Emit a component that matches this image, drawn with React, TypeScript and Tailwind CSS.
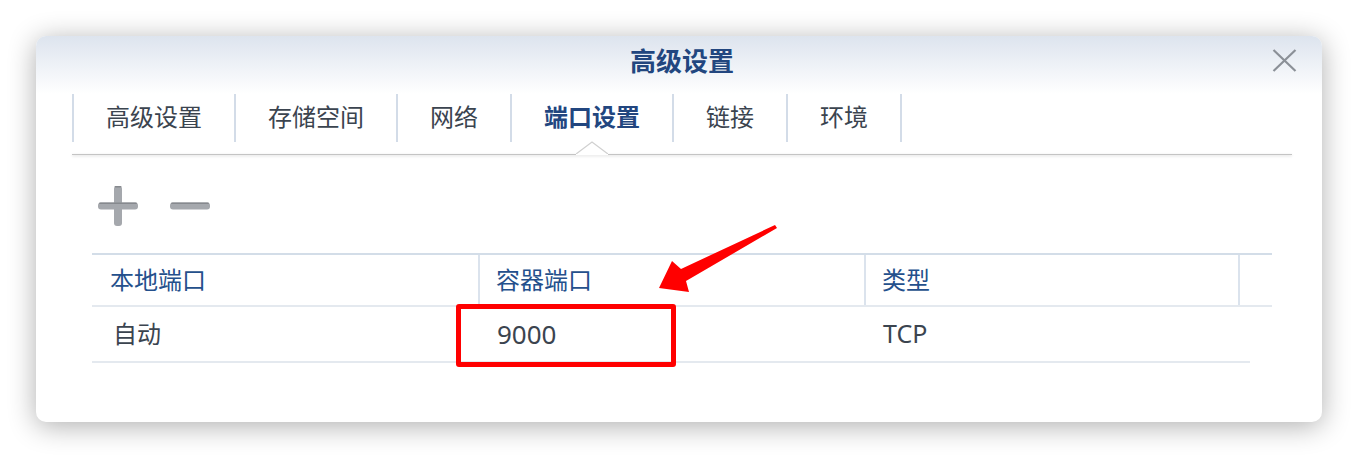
import React from 'react'

const tabs = ["高级设置", "存储空间", "网络", "端口设置", "链接", "环境"]

function App() {
  const font = { fontFamily: '"Noto Sans", "Noto Sans CJK SC", sans-serif' }
  return (
    <div className="relative h-[458px] w-[1358px] bg-white pl-[36px] pt-[36px]" style={font}>
      <div className="relative h-[386px] w-[1286px] rounded-[10px] bg-white shadow-[0_4px_28px_rgba(0,0,0,0.32)]">
        {/* title bar */}
        <div className="flex h-[58px] justify-center rounded-t-[10px] bg-gradient-to-b from-[#dde4ee] to-white pl-[6px] pt-[10px]">
          <div className="text-[26px] font-bold leading-[30px] text-[#22467f]">高级设置</div>
        </div>
        <div className="absolute right-[25px] top-[13px] h-[23px] w-[25px]">
          <svg width="25" height="23" viewBox="0 0 25 23">
            <path d="M1.5 1 L23.5 22 M23.5 1 L1.5 22" stroke="#8b9097" strokeWidth="2.2" />
          </svg>
        </div>

        {/* tabs */}
        <div className="ml-[36px] mr-[30px]">
          <div className="flex h-[60px] items-start">
            {tabs.map((t, i) => (
              <div
                key={t}
                className={`relative flex h-[48px] items-center border-l-2 border-[#d3dce8] px-[32px] pb-[2px] text-[24px] ${
                  i == tabs.length - 1 ? "border-r-2" : ""
                } ${i == 3 ? "font-bold text-[#22467f]" : "text-[#3b444f]"}`}
              >
                {t}
                {i == 3 && (
                  <svg className="absolute left-1/2 top-[47px] -translate-x-1/2" width="32" height="14" viewBox="0 0 32 14">
                    <path d="M0 13 L16 1 L32 13" fill="white" stroke="#d0d0d0" strokeWidth="1.2" />
                    <rect x="0" y="13" width="32" height="1" fill="white" />
                  </svg>
                )}
              </div>
            ))}
          </div>
          <div className="h-px bg-[#c4c4c4] shadow-[0_1px_3px_rgba(0,0,0,0.2)]"></div>
        </div>

        {/* toolbar */}
        <div className="ml-[62px] mt-[31px] flex h-[40px] gap-[32px]">
          <svg width="40" height="40" viewBox="0 0 40 40">
            <rect x="16" y="0" width="8" height="40" rx="3" fill="#a5a8ad" />
            <rect x="0" y="16.5" width="40" height="7" rx="3" fill="#a5a8ad" />
            <rect x="16.5" y="0" width="7" height="1.5" rx="1" fill="#86898e" />
            <rect x="1" y="16.5" width="38" height="1.5" rx="1" fill="#86898e" />
          </svg>
          <svg width="40" height="40" viewBox="0 0 40 40">
            <rect x="0" y="16.5" width="40" height="7" rx="3" fill="#a5a8ad" />
            <rect x="1" y="16.5" width="38" height="1.5" rx="1" fill="#86898e" />
          </svg>
        </div>

        {/* table */}
        <div className="relative ml-[56px] mt-[27px] w-[1180px]">
          <div className="flex h-[54px] border-b-2 border-t-2 border-[#d3dde8] border-b-[#e4e9ef] text-[24px] text-[#24508c]">
            <div className="flex w-[386px] items-center pl-[18px]">本地端口</div>
            <div className="flex w-[386px] items-center border-l-2 border-[#dbe3ed] pl-[16px]">容器端口</div>
            <div className="flex w-[374px] items-center border-l-2 border-[#dbe3ed] pl-[16px]">类型</div>
            <div className="flex-1 border-l-2 border-[#dbe3ed]"></div>
          </div>
          <div className="flex h-[56px] w-[1158px] border-b-2 border-[#e4e9ef] text-[24px] text-[#3b444f]">
            <div className="flex w-[387px] items-center pl-[21px]">自动</div>
            <div className="flex w-[386px] items-center pl-[18px] text-[26px]">9000</div>
            <div className="flex flex-1 items-center pl-[18px] text-[25px]">TCP</div>
          </div>
          <div className="absolute left-[364px] top-[51px] h-[63px] w-[220px] rounded-[3px] border-[5px] border-[#ff0000]"></div>
        </div>
      </div>

      {/* annotation arrow */}
      <svg className="pointer-events-none absolute left-0 top-0" width="1358" height="458" viewBox="0 0 1358 458">
        <polygon points="775,225 777,228 686,281 689,292 659,288 672,261 681,269" fill="#ff0000" />
      </svg>
    </div>
  )
}

export default App
